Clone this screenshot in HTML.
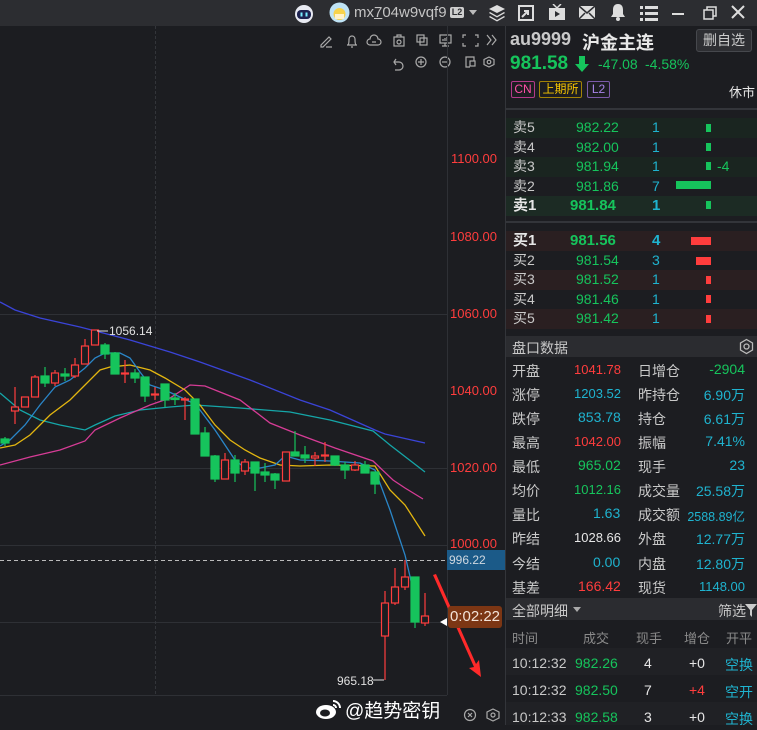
<!DOCTYPE html>
<html><head><meta charset="utf-8"><style>
*{margin:0;padding:0;box-sizing:border-box}
body{width:757px;height:725px;background:#1c1d21;font-family:"Liberation Sans","Noto Sans CJK SC",sans-serif;overflow:hidden;position:relative;color:#c8c8c8}
.a{position:absolute;white-space:nowrap}
.g{color:#16c45c}.r{color:#ff3d3d}.c{color:#1fb3cf}.w{color:#e6e6e6}.l{color:#c9c9c9}
.row{position:absolute;left:506px;width:251px;height:19.6px;font-size:14px}
.row span{position:absolute;top:0px;line-height:19.6px}
.d{position:absolute;font-size:14px;left:506px;width:251px;height:24px}
.d span{position:absolute;top:3px}
.ax{position:absolute;left:447px;width:50px;text-align:right;color:#ff3d3d;font-size:13px}
</style></head><body>
<div class="a" style="left:0;top:0;width:757px;height:26px;background:#2c2d31"></div>
<svg class="a" style="left:293px;top:3px" width="22" height="20"><circle cx="11" cy="11" r="9" fill="#e8eaf2"/><rect x="4" y="7" width="14" height="9" rx="4" fill="#1d2350"/><rect x="7.5" y="9.5" width="2" height="4" fill="#7ef"/><rect x="12.5" y="9.5" width="2" height="4" fill="#7ef"/></svg>
<svg class="a" style="left:329px;top:2px" width="21" height="21"><circle cx="10.5" cy="10.5" r="10" fill="#bfe3f5"/><circle cx="10.5" cy="12" r="6" fill="#f7d34a"/><rect x="6" y="12" width="9" height="5" fill="#fff2c8"/></svg>
<div class="a" style="left:354px;top:4px;font-size:15px;color:#c4c4c4">mx<u>7</u>04w9vqf9</div>
<div class="a" style="left:450px;top:7px;width:14px;height:11px;background:#cfcfcf;border-radius:2px;color:#2c2d31;font-size:9px;font-weight:bold;text-align:center;line-height:11px">L2</div>
<div class="a" style="left:469px;top:10px;border:4px solid transparent;border-top:5px solid #bbb"></div>
<svg class="a" style="left:488px;top:4px" width="18" height="18" fill="#ddd"><path d="M9 1 17 5 9 9 1 5z"/><path d="M2 8l7 4 7-4 1 1-8 4.5L1 9z"/><path d="M2 12l7 4 7-4 1 1-8 4.5L1 13z"/></svg>
<svg class="a" style="left:518px;top:5px" width="16" height="16" fill="none" stroke="#ddd" stroke-width="2"><rect x="1" y="1" width="14" height="14"/><path d="M4 12l6-6M6 6h4v4"/></svg>
<svg class="a" style="left:548px;top:4px" width="18" height="17" fill="#ddd"><rect x="1" y="4" width="16" height="12"/><path d="M5 0l4 4 4-4" stroke="#ddd" fill="none" stroke-width="1.5"/><path d="M7 7v6l5-3z" fill="#2c2d31"/></svg>
<svg class="a" style="left:578px;top:5px" width="18" height="15" fill="#ddd"><rect x="1" y="1" width="16" height="13"/><path d="M1 1l8 7 8-7M1 14l6-6M17 14l-6-6" stroke="#2c2d31" stroke-width="1.5" fill="none"/></svg>
<svg class="a" style="left:610px;top:3px" width="16" height="18" fill="#ddd"><path d="M8 1c-4 0-5 3-5 6v4l-2 3h14l-2-3V7c0-3-1-6-5-6z"/><circle cx="8" cy="16" r="2"/></svg>
<svg class="a" style="left:640px;top:5px" width="18" height="16" fill="#ddd"><rect x="0" y="1" width="3" height="3"/><rect x="5" y="1" width="13" height="3"/><rect x="0" y="7" width="3" height="3"/><rect x="5" y="7" width="13" height="3"/><rect x="0" y="13" width="3" height="3"/><rect x="5" y="13" width="13" height="3"/></svg>
<div class="a" style="left:672px;top:13px;width:12px;height:2px;background:#ddd"></div>
<svg class="a" style="left:703px;top:6px" width="14" height="14" fill="none" stroke="#ddd" stroke-width="1.5"><rect x="1" y="4" width="9" height="9"/><path d="M4 4V1h9v9h-3"/></svg>
<svg class="a" style="left:731px;top:5px" width="14" height="14" stroke="#ddd" stroke-width="2"><path d="M1 1l12 12M13 1L1 13"/></svg>

<svg class="a" style="left:318px;top:32px" width="185" height="48" fill="none" stroke="#aaa" stroke-width="1.2">
<path d="M3 13l8-8 2 2-8 8H3zM8 15h6"/>
<path d="M29 13h10M30 13c1-1 1-3 1-6a3 3 0 0 1 6 0c0 3 0 5 1 6M33 15h2"/>
<path d="M52 13a3 3 0 0 1 0-6 4 4 0 0 1 8 0 3 3 0 0 1 0 6zM54 10h4"/>
<rect x="76" y="5" width="10" height="9"/><circle cx="81" cy="10" r="2"/><path d="M79 5V3h4v2"/>
<rect x="99" y="3" width="7" height="7"/><rect x="102" y="6" width="7" height="7"/>
<rect x="122" y="3" width="11" height="8"/><path d="M127 11v3M124 14h7M125 9V7M127 9V6M129 9V5"/>
<path d="M145 6V3h3M157 3h3v3M145 11v3h3M157 14h3v-3"/>
<path d="M169 3l4 5-4 5M174 3l4 5-4 5"/>
<path d="M78 27l-2 3 2 3M76 30h5a4 4 0 0 1 0 8h-4"/>
<circle cx="103" cy="30" r="5"/><path d="M100 30h6M103 27v6"/>
<circle cx="127" cy="30" r="5"/><path d="M124 30h6"/>
<path d="M152 35h-4v-10h8v4"/><rect x="152" y="29" width="5" height="5"/>
<path d="M171 25l5 2.5v5L171 35l-5-2.5v-5z"/><circle cx="171" cy="30" r="1.8"/>
</svg>

<svg class="a" style="left:0;top:0" width="505" height="725">
<g stroke="#2e3035" stroke-width="1">
<line x1="0" y1="314.5" x2="447" y2="314.5"/>
<line x1="0" y1="468.5" x2="447" y2="468.5"/>
<line x1="0" y1="545.5" x2="447" y2="545.5"/>
<line x1="0" y1="622.5" x2="447" y2="622.5"/>
<line x1="447.5" y1="26" x2="447.5" y2="695"/>
<line x1="0" y1="695.5" x2="447" y2="695.5"/>
</g>
<line x1="155.5" y1="26" x2="155.5" y2="695" stroke="#33353a" stroke-dasharray="3,2"/>
<line x1="0" y1="560.5" x2="447" y2="560.5" stroke="#bbb" stroke-dasharray="4,3"/>
<g fill="none" stroke-width="1.3">
<polyline stroke="#3a44d8" points="0,302 15,310 40,318 80,327 130,340 170,352 200,362 250,380 300,400 330,410 375,430 385,434 425,443"/>
<polyline stroke="#15a6a8" points="0,393 20,410 40,420 60,425 85,430 95,425 115,416 140,410 170,407 195,405 240,408 290,412 330,420 373,431 390,445 425,472"/>
<polyline stroke="#d63c96" points="0,465 30,457 60,450 85,441 95,430 120,418 150,405 170,398 190,385 205,386 240,400 270,423 300,435 335,448 373,461 393,480 405,488 423,499"/>
<polyline stroke="#e3b610" points="0,448 15,445 30,435 50,415 70,400 85,385 100,370 110,367 130,365 150,370 165,378 185,390 200,405 215,425 230,440 245,450 260,458 280,465 300,466 330,465 375,466 390,490 405,505 425,536"/>
<polyline stroke="#2a86c8" points="0,446 10,440 25,425 40,405 55,387 70,380 85,368 95,358 105,353 120,353 130,358 140,372 150,385 165,390 180,397 195,404 200,410 215,430 235,460 245,468 260,468 275,465 285,456 300,460 330,461 360,463 375,470 390,510 405,555 415,598"/>
</g>
<g stroke-width="1.2">
<g stroke="#16c45c" fill="#16c45c">
<line x1="5" y1="437" x2="5" y2="446"/><rect x="1" y="439" width="8" height="4"/>
<line x1="45" y1="367" x2="45" y2="387"/><rect x="41" y="376" width="8" height="7"/>
<line x1="65" y1="368" x2="65" y2="381"/><rect x="61" y="374" width="8" height="2"/>
<line x1="105" y1="343" x2="105" y2="359"/><rect x="101" y="345" width="8" height="9"/>
<line x1="115" y1="352" x2="115" y2="374"/><rect x="111" y="353" width="8" height="21"/>
<line x1="135" y1="369" x2="135" y2="383"/><rect x="131" y="373" width="8" height="5"/>
<line x1="145" y1="377" x2="145" y2="402"/><rect x="141" y="377" width="8" height="19"/>
<line x1="165" y1="384" x2="165" y2="407"/><rect x="161" y="384" width="8" height="16"/>
<line x1="175" y1="393" x2="175" y2="405"/><rect x="171" y="398" width="8" height="1.5"/>
<line x1="195" y1="399" x2="195" y2="434"/><rect x="191" y="399" width="8" height="35"/>
<line x1="205" y1="427" x2="205" y2="456"/><rect x="201" y="433" width="8" height="23"/>
<line x1="215" y1="455" x2="215" y2="482"/><rect x="211" y="456" width="8" height="23"/>
<line x1="235" y1="455" x2="235" y2="482"/><rect x="231" y="460" width="8" height="13"/>
<line x1="255" y1="462" x2="255" y2="491"/><rect x="251" y="462" width="8" height="11"/>
<line x1="265" y1="463" x2="265" y2="482"/><rect x="261" y="472" width="8" height="3"/>
<line x1="275" y1="473" x2="275" y2="489"/><rect x="271" y="474" width="8" height="6"/>
<line x1="295" y1="431" x2="295" y2="456"/><rect x="291" y="452" width="8" height="4"/>
<line x1="305" y1="446" x2="305" y2="463"/><rect x="301" y="455" width="8" height="3"/>
<line x1="335" y1="456" x2="335" y2="466"/><rect x="331" y="456" width="8" height="9"/>
<line x1="345" y1="462" x2="345" y2="479"/><rect x="341" y="465" width="8" height="5"/>
<line x1="365" y1="461" x2="365" y2="473"/><rect x="361" y="465" width="8" height="8"/>
<line x1="375" y1="472" x2="375" y2="494"/><rect x="371" y="472" width="8" height="12"/>
<line x1="415" y1="577" x2="415" y2="628"/><rect x="411" y="577" width="8" height="45"/>
</g>
<g stroke="#ff3d3d" fill="#1c1d21">
<line x1="15" y1="387" x2="15" y2="424"/><rect x="11.5" y="407" width="7" height="4"/>
<line x1="25" y1="397" x2="25" y2="407"/><rect x="21.5" y="397" width="7" height="10"/>
<line x1="35" y1="375" x2="35" y2="397"/><rect x="31.5" y="377" width="7" height="20"/>
<line x1="55" y1="370" x2="55" y2="386"/><rect x="51.5" y="373" width="7" height="10"/>
<line x1="75" y1="358" x2="75" y2="378"/><rect x="71.5" y="365" width="7" height="11"/>
<line x1="85" y1="339" x2="85" y2="364"/><rect x="81.5" y="346" width="7" height="18"/>
<line x1="95" y1="330" x2="95" y2="345"/><rect x="91.5" y="330" width="7" height="15"/>
<line x1="125" y1="360" x2="125" y2="383"/><rect x="121.5" y="373" width="7" height="1"/>
<line x1="155" y1="387" x2="155" y2="400"/><rect x="151.5" y="394" width="7" height="1"/>
<line x1="185" y1="397" x2="185" y2="420"/><rect x="181.5" y="399" width="7" height="1"/>
<line x1="225" y1="453" x2="225" y2="479"/><rect x="221.5" y="460" width="7" height="19"/>
<line x1="245" y1="459" x2="245" y2="475"/><rect x="241.5" y="462" width="7" height="9"/>
<line x1="286" y1="452" x2="286" y2="481"/><rect x="282.5" y="452" width="7" height="29"/>
<line x1="315" y1="452" x2="315" y2="466"/><rect x="311.5" y="456" width="7" height="2"/>
<line x1="325" y1="442" x2="325" y2="462"/><rect x="321.5" y="455" width="7" height="1"/>
<line x1="355" y1="461" x2="355" y2="471"/><rect x="351.5" y="465" width="7" height="5"/>
<line x1="385" y1="591" x2="385" y2="680"/><rect x="381.5" y="603" width="7" height="33"/>
<line x1="395" y1="568" x2="395" y2="605"/><rect x="391.5" y="587" width="7" height="16"/>
<line x1="405" y1="560" x2="405" y2="590"/><rect x="401.5" y="577" width="7" height="10"/>
<line x1="425" y1="593" x2="425" y2="626"/><rect x="421.5" y="616" width="7" height="7"/>
</g>
</g>
<line x1="97" y1="331" x2="108" y2="331" stroke="#ddd"/>
<text x="109" y="335" fill="#e0e0e0" font-size="12" font-family="Liberation Sans">1056.14</text>
<text x="337" y="685" fill="#e0e0e0" font-size="12" font-family="Liberation Sans">965.18</text>
<line x1="373" y1="680" x2="384" y2="680" stroke="#ddd"/>
<path d="M433 575 L474 667 L469 668 L481 677 L479 660 L476 664 L436 574z" fill="#ff2a2a"/>
<path d="M440 622 l7-4 v8z" fill="#fff"/>
</svg>
<div class="ax" style="top:151px">1100.00</div>
<div class="ax" style="top:229px">1080.00</div>
<div class="ax" style="top:306px">1060.00</div>
<div class="ax" style="top:383px">1040.00</div>
<div class="ax" style="top:460px">1020.00</div>
<div class="ax" style="top:536px">1000.00</div>
<div class="a" style="left:447px;top:550px;width:58px;height:20px;background:#1b5a88;color:#cfd8e0;font-size:12px;line-height:20px;padding-left:2px">996.22</div>
<div class="a" style="left:448px;top:606px;width:54px;height:22px;background:#7c3614;border-radius:3px;color:#f3e3d8;font-size:15px;line-height:22px;text-align:center">0:02:22</div>
<svg class="a" style="left:314px;top:697px" width="28" height="24"><ellipse cx="12" cy="15" rx="10" ry="7" fill="#fff"/><ellipse cx="11" cy="16" rx="5" ry="3.5" fill="#1c1d21"/><path d="M19 4a7 7 0 0 1 7 7M19 8a3 3 0 0 1 3 3" stroke="#fff" stroke-width="2" fill="none"/></svg>
<div class="a" style="left:345px;top:696px;font-size:19px;color:#fff">@趋势密钥</div>
<svg class="a" style="left:462px;top:707px" width="40" height="16" fill="none" stroke="#aaa" stroke-width="1.2"><circle cx="8" cy="8" r="5.5"/><path d="M6 6l4 4M10 6l-4 4"/><path d="M31 2l6 3v6l-6 3-6-3V5z"/><circle cx="31" cy="8" r="2"/></svg>

<div class="a" style="left:505px;top:26px;width:1px;height:699px;background:#33353a"></div>
<div class="a" style="left:510px;top:29px;font-size:18px;font-weight:bold;color:#c8c8c8">au9999</div>
<div class="a" style="left:582px;top:29px;font-size:18px;font-weight:bold;color:#e8e8e8">沪金主连</div>
<div class="a" style="left:696px;top:29px;width:56px;height:23px;background:#2e2f33;border:1px solid #46484d;border-radius:3px;font-size:14px;color:#ccc;text-align:center;line-height:21px">删自选</div>
<div class="a g" style="left:510px;top:53px;font-size:19px;font-weight:bold">981.58</div>
<svg class="a" style="left:575px;top:56px" width="14" height="16" fill="#16c45c"><path d="M4 0h6v8h4l-7 8-7-8h4z"/></svg>
<div class="a g" style="left:598px;top:56px;font-size:14px">-47.08</div>
<div class="a g" style="left:645px;top:56px;font-size:14px">-4.58%</div>
<div class="a" style="left:511px;top:81px;width:24px;height:17px;border:1px solid #b23a8a;border-radius:2px;color:#ff4fa8;font-size:12px;text-align:center;line-height:15px">CN</div>
<div class="a" style="left:539px;top:81px;width:43px;height:17px;border:1px solid #a38206;border-radius:2px;color:#f5c400;font-size:12px;text-align:center;line-height:15px">上期所</div>
<div class="a" style="left:587px;top:81px;width:23px;height:17px;border:1px solid #7b5aa8;border-radius:2px;color:#a884e8;font-size:12px;text-align:center;line-height:15px">L2</div>
<div class="a w" style="left:729px;top:82px;font-size:13px">休市</div>
<div class="a" style="left:506px;top:108px;width:251px;height:2px;background:#33353a"></div>

<div class="row" style="top:118px;background:#1a2520"><span class="l" style="left:7px">卖5</span><span class="g" style="left:70px">982.22</span><span class="c" style="left:146px">1</span></div>
<div class="row" style="top:137.6px"><span class="l" style="left:7px">卖4</span><span class="g" style="left:70px">982.00</span><span class="c" style="left:146px">1</span></div>
<div class="row" style="top:157.2px;background:#1a2520"><span class="l" style="left:7px">卖3</span><span class="g" style="left:70px">981.94</span><span class="c" style="left:146px">1</span><span class="g" style="left:211px">-4</span></div>
<div class="row" style="top:176.8px"><span class="l" style="left:7px">卖2</span><span class="g" style="left:70px">981.86</span><span class="c" style="left:146px">7</span></div>
<div class="row" style="top:196.4px;background:#1c2b24;font-weight:bold;font-size:15px"><span class="w" style="left:7px">卖1</span><span class="g" style="left:64px">981.84</span><span class="c" style="left:146px">1</span></div>
<div class="a" style="left:706px;top:124px;width:5px;height:8px;background:#16c45c"></div>
<div class="a" style="left:706px;top:143px;width:5px;height:8px;background:#16c45c"></div>
<div class="a" style="left:706px;top:162px;width:5px;height:8px;background:#16c45c"></div>
<div class="a" style="left:676px;top:181px;width:35px;height:8px;background:#16c45c"></div>
<div class="a" style="left:706px;top:201px;width:5px;height:8px;background:#16c45c"></div>
<div class="a" style="left:506px;top:221px;width:251px;height:2px;background:#33353a"></div>
<div class="row" style="top:231px;background:#2a1f21;font-weight:bold;font-size:15px"><span class="w" style="left:7px">买1</span><span class="g" style="left:64px">981.56</span><span class="c" style="left:146px">4</span></div>
<div class="row" style="top:250.6px"><span class="l" style="left:7px">买2</span><span class="g" style="left:70px">981.54</span><span class="c" style="left:146px">3</span></div>
<div class="row" style="top:270.2px;background:#2a1f21"><span class="l" style="left:7px">买3</span><span class="g" style="left:70px">981.52</span><span class="c" style="left:146px">1</span></div>
<div class="row" style="top:289.8px"><span class="l" style="left:7px">买4</span><span class="g" style="left:70px">981.46</span><span class="c" style="left:146px">1</span></div>
<div class="row" style="top:309.4px;background:#2a1f21"><span class="l" style="left:7px">买5</span><span class="g" style="left:70px">981.42</span><span class="c" style="left:146px">1</span></div>
<div class="a" style="left:691px;top:237px;width:20px;height:8px;background:#ff3d3d"></div>
<div class="a" style="left:696px;top:257px;width:15px;height:8px;background:#ff3d3d"></div>
<div class="a" style="left:706px;top:276px;width:5px;height:8px;background:#ff3d3d"></div>
<div class="a" style="left:706px;top:295px;width:5px;height:8px;background:#ff3d3d"></div>
<div class="a" style="left:706px;top:315px;width:5px;height:8px;background:#ff3d3d"></div>

<div class="a" style="left:506px;top:336px;width:251px;height:21px;background:#2b2c30"></div>
<div class="a l" style="left:512px;top:338px;font-size:14px">盘口数据</div>
<svg class="a" style="left:738px;top:338px" width="17" height="17" fill="none" stroke="#bbb" stroke-width="1.3"><path d="M8.5 1.5l6 3.5v7l-6 3.5-6-3.5V5z"/><circle cx="8.5" cy="8.5" r="2.5"/></svg>

<div class="d" style="top:358px"><span class="l" style="left:6px">开盘</span><span class="r" style="left:68px;font-size:13px;top:4px">1041.78</span><span class="l" style="left:132px">日增仓</span><span class="g" style="right:12px">-2904</span></div>
<div class="d" style="top:382px"><span class="l" style="left:6px">涨停</span><span class="c" style="left:68px;font-size:13px;top:4px">1203.52</span><span class="l" style="left:132px">昨持仓</span><span class="c" style="right:12px">6.90万</span></div>
<div class="d" style="top:406px"><span class="l" style="left:6px">跌停</span><span class="c" style="left:72px">853.78</span><span class="l" style="left:132px">持仓</span><span class="c" style="right:12px">6.61万</span></div>
<div class="d" style="top:430px"><span class="l" style="left:6px">最高</span><span class="r" style="left:68px;font-size:13px;top:4px">1042.00</span><span class="l" style="left:132px">振幅</span><span class="c" style="right:12px">7.41%</span></div>
<div class="d" style="top:454px"><span class="l" style="left:6px">最低</span><span class="g" style="left:72px">965.02</span><span class="l" style="left:132px">现手</span><span class="c" style="right:12px">23</span></div>
<div class="d" style="top:478px"><span class="l" style="left:6px">均价</span><span class="g" style="left:68px;font-size:13px;top:4px">1012.16</span><span class="l" style="left:132px">成交量</span><span class="c" style="right:12px">25.58万</span></div>
<div class="d" style="top:502px"><span class="l" style="left:6px">量比</span><span class="c" style="left:87px">1.63</span><span class="l" style="left:132px">成交额</span><span class="c" style="right:12px;font-size:12.5px;top:4px">2588.89亿</span></div>
<div class="d" style="top:526px"><span class="l" style="left:6px">昨结</span><span class="w" style="left:68px;font-size:13px;top:4px">1028.66</span><span class="l" style="left:132px">外盘</span><span class="c" style="right:12px">12.77万</span></div>
<div class="d" style="top:551px"><span class="l" style="left:6px">今结</span><span class="c" style="left:87px">0.00</span><span class="l" style="left:132px">内盘</span><span class="c" style="right:12px">12.80万</span></div>
<div class="d" style="top:575px"><span class="l" style="left:6px">基差</span><span class="r" style="left:72px">166.42</span><span class="l" style="left:132px">现货</span><span class="c" style="right:12px;font-size:13px;top:4px">1148.00</span></div>

<div class="a" style="left:506px;top:598px;width:251px;height:22px;background:#2b2c30"></div>
<div class="a l" style="left:512px;top:601px;font-size:14px">全部明细</div>
<div class="a" style="left:573px;top:607px;border:4px solid transparent;border-top:5px solid #aaa"></div>
<div class="a l" style="left:718px;top:601px;font-size:14px">筛选</div>
<svg class="a" style="left:745px;top:604px" width="12" height="13" fill="#ccc"><path d="M0 0h12L7 6v7L5 11V6z"/></svg>
<div class="a" style="left:512px;top:628px;font-size:13px;color:#8a8a8a">时间</div>
<div class="a" style="left:583px;top:628px;font-size:13px;color:#8a8a8a">成交</div>
<div class="a" style="left:636px;top:628px;font-size:13px;color:#8a8a8a">现手</div>
<div class="a" style="left:684px;top:628px;font-size:13px;color:#8a8a8a">增仓</div>
<div class="a" style="left:726px;top:628px;font-size:13px;color:#8a8a8a">开平</div>
<div class="a" style="left:506px;top:648px;width:251px;height:27px;background:#202125"></div>
<div class="a" style="left:506px;top:702px;width:251px;height:23px;background:#202125"></div>
<div class="d" style="top:652px"><span class="l" style="left:6px">10:12:32</span><span class="g" style="left:69px">982.26</span><span class="w" style="left:138px">4</span><span class="w" style="left:183px">+0</span><span class="c" style="left:219px">空换</span></div>
<div class="d" style="top:679px"><span class="l" style="left:6px">10:12:32</span><span class="g" style="left:69px">982.50</span><span class="w" style="left:138px">7</span><span class="r" style="left:183px">+4</span><span class="c" style="left:219px">空开</span></div>
<div class="d" style="top:706px"><span class="l" style="left:6px">10:12:33</span><span class="g" style="left:69px">982.58</span><span class="w" style="left:138px">3</span><span class="w" style="left:183px">+0</span><span class="c" style="left:219px">空换</span></div>
</body></html>
